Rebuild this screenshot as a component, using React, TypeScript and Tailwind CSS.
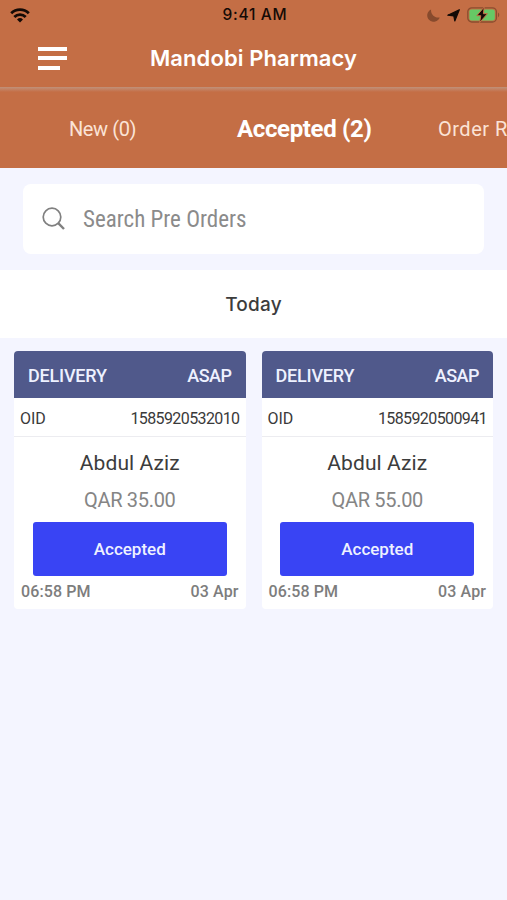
type Order = {
  oid: string;
  customer: string;
  amount: string;
  time: string;
  date: string;
};

const ORDERS: Order[] = [
  { oid: "1585920532010", customer: "Abdul Aziz", amount: "QAR 35.00", time: "06:58 PM", date: "03 Apr" },
  { oid: "1585920500941", customer: "Abdul Aziz", amount: "QAR 55.00", time: "06:58 PM", date: "03 Apr" },
];

function WifiIcon() {
  return (
    <svg className="block h-[15px] w-5" viewBox="0 0 20 15" fill="none" stroke="#140a06" strokeWidth="2.8">
      <path d="M1.2 5.2a12.6 12.6 0 0 1 17.6 0" />
      <path d="M4.3 8.9a8.1 8.1 0 0 1 11.4 0" />
      <path d="M10 14.4 7 11.5a4.3 4.3 0 0 1 6 0Z" fill="#140a06" stroke="none" />
    </svg>
  );
}

function MoonIcon() {
  return (
    <svg className="block h-[13px] w-[13px]" viewBox="0 0 13 13">
      <path d="M4.1.5C3.4 5 7.6 9.4 12.7 8.4A6.4 6.4 0 1 1 4.1.5Z" fill="#874a2d" />
    </svg>
  );
}

function LocationIcon() {
  return (
    <svg className="block h-[13px] w-[13px]" viewBox="0 0 13 13">
      <path d="M12.3.7 7.8 12 6.8 6.9.8 6.2Z" fill="#140a06" stroke="#140a06" strokeWidth="1.2" strokeLinejoin="round" />
    </svg>
  );
}

function BatteryIcon() {
  return (
    <svg className="block h-4 w-[33px]" viewBox="0 0 33 16">
      <rect x=".8" y=".8" width="28.6" height="14.2" rx="4" fill="none" stroke="#8b4e2f" strokeWidth="1.3" />
      <rect x="2.4" y="2.4" width="25.4" height="11" rx="2.2" fill="#66c965" />
      <path d="M31 5.6c1.7.8 1.7 3.8 0 4.6Z" fill="#8b4e2f" />
      <path d="M17.2 0 9.8 8.7h4L12.6 15.6 20.4 6.7h-4Z" fill="#140a06" stroke="#c56f45" strokeWidth="1" />
    </svg>
  );
}

function StatusBar() {
  return (
    <div className="grid h-[30px] grid-cols-3 items-center pr-[7px] pl-[10px]">
      <WifiIcon />
      <span className="text-center font-['Inter',sans-serif] text-[15.5px] leading-5 font-medium tracking-[0.7px] text-[#140a06]">
        9:41 AM
      </span>
      <div className="flex items-center justify-end gap-[7px]">
        <MoonIcon />
        <LocationIcon />
        <BatteryIcon />
      </div>
    </div>
  );
}

function Header() {
  return (
    <header className="h-[87px] bg-[#c46e45]">
      <StatusBar />
      <div className="grid h-[56px] grid-cols-[66px_1fr_66px] items-center">
        <button className="ml-[38px] flex w-[29px] flex-col gap-[5.5px]" aria-label="Menu">
          <span className="h-1 w-[29px] bg-white" />
          <span className="h-1 w-[29px] bg-white" />
          <span className="h-1 w-[22px] bg-white" />
        </button>
        <h1 className="text-center font-['Inter',sans-serif] text-[22px] leading-7 font-semibold tracking-[0.1px] text-white">
          Mandobi Pharmacy
        </h1>
      </div>
    </header>
  );
}

function Tabs() {
  return (
    <nav className="flex h-[81px] items-center overflow-hidden bg-[#c46e45] bg-linear-to-b from-[#c09079] from-0% to-[#c46e45] to-[5px] pt-0.5 pl-[69px] whitespace-nowrap">
      <span className="w-[168px] shrink-0 text-[20px] tracking-[-0.4px] text-[#fbe3d6]">New (0)</span>
      <span className="w-[201px] shrink-0 text-[24px] font-bold tracking-[-0.35px] text-white">Accepted (2)</span>
      <span className="shrink-0 text-[20px] tracking-[0.5px] text-[#fbe3d6]">Order R</span>
    </nav>
  );
}

function SearchBox() {
  return (
    <div className="px-[23px] pt-4 pb-4">
      <div className="flex h-[70px] items-center rounded-lg bg-white pl-[19px] text-[#8b8b8b]">
        <svg className="h-6 w-6" viewBox="0 0 24 24" fill="none" stroke="#808080">
          <circle cx="10" cy="10" r="8.8" strokeWidth="1.7" />
          <path d="m16.2 16.2 5.8 5.8" strokeWidth="2.4" />
        </svg>
        <span className="mt-0.5 ml-[17px] text-[23px] [font-stretch:75%]">Search Pre Orders</span>
      </div>
    </div>
  );
}

function OrderCard({ order }: { order: Order }) {
  return (
    <article className="h-[258px] flex-1 overflow-hidden rounded bg-white">
      <div className="flex h-[47px] items-center justify-between bg-[#50598b] px-[14px] pt-0.5 text-[18px] font-medium text-[#eef1ff]">
        <span className="tracking-[-0.2px]">DELIVERY</span>
        <span className="tracking-[-0.5px]">ASAP</span>
      </div>
      <div className="flex h-[39px] items-center justify-between border-b border-[#ececf0] px-[6px] pt-[3px] text-[16px] text-[#3a3a3a]">
        <span>OID</span>
        <span className="tracking-[-0.6px]">{order.oid}</span>
      </div>
      <p className="mt-3 text-center text-[21px] leading-7 tracking-[0.1px] text-[#3c3c3c]">{order.customer}</p>
      <p className="mt-[9px] text-center text-[20px] leading-7 tracking-[-0.3px] text-[#858585]">{order.amount}</p>
      <button className="mx-auto mt-2 flex h-[54px] w-[194px] items-center justify-center rounded-[3px] bg-[#3944f4] pt-0.5 text-[17px] font-medium text-[#eef1ff]">
        Accepted
      </button>
      <div className="flex h-[31px] items-center justify-between px-[7px] text-[16px] font-medium tracking-[0.1px] text-[#7d7d7d]">
        <span>{order.time}</span>
        <span>{order.date}</span>
      </div>
    </article>
  );
}

export default function App() {
  return (
    <div className="h-[900px] w-[507px] overflow-hidden bg-[#f4f5ff] font-['Roboto',sans-serif]">
      <Header />
      <Tabs />
      <SearchBox />
      <h2 className="flex h-[68px] items-center justify-center bg-white pt-[3px] font-['Inter',sans-serif] text-[19px] font-medium tracking-[0.2px] text-[#3c3c3c]">
        Today
      </h2>
      <main className="flex gap-4 px-[14px] pt-[13px]">
        {ORDERS.map((order) => (
          <OrderCard key={order.oid} order={order} />
        ))}
      </main>
    </div>
  );
}
